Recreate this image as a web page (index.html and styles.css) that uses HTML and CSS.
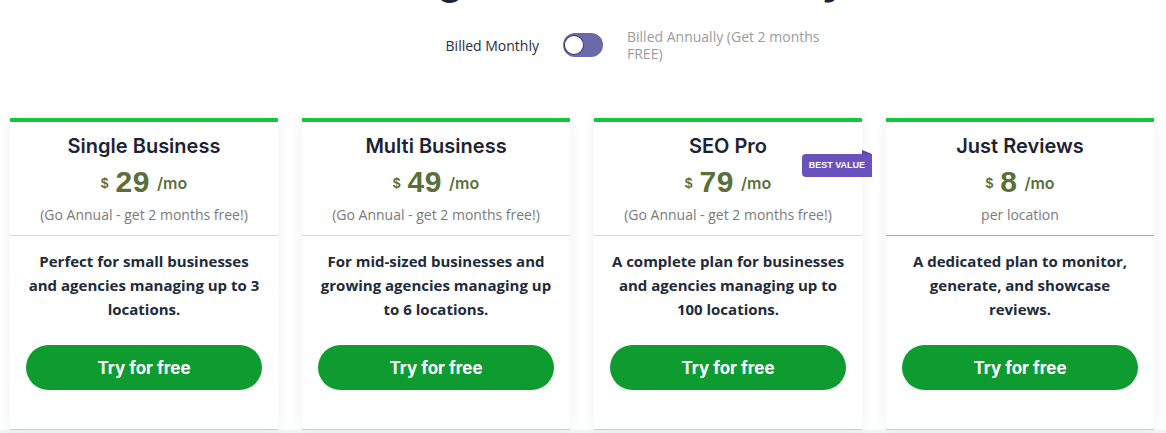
FILE: index.html
```html
<!DOCTYPE html>
<html>
<head>
<meta charset="utf-8">
<link rel="stylesheet" href="styles.css">
</head>
<body>
<section class="pricing">
  <h1 class="heading">Pricing That Scales Easily</h1>
  <div class="billing">
    <span class="bill-label bill-monthly">Billed Monthly</span>
    <span class="switch"><span class="knob"></span></span>
    <span class="bill-label bill-annual"><span>Billed Annually (Get 2 months FREE)</span></span>
  </div>
  <div class="cards">
    <div class="card">
      <div class="card-head">
        <h2 class="plan">Single Business</h2>
        <div class="price"><span class="cur">$</span><span class="amount">29</span><span class="per">/mo</span></div>
        <div class="note">(Go Annual - get 2 months free!)</div>
      </div>
      <div class="card-body">
        <p class="desc">Perfect for small businesses and agencies managing up to 3 locations.</p>
        <a class="btn">Try for free</a>
      </div>
    </div>
    <div class="card">
      <div class="card-head">
        <h2 class="plan">Multi Business</h2>
        <div class="price"><span class="cur">$</span><span class="amount">49</span><span class="per">/mo</span></div>
        <div class="note">(Go Annual - get 2 months free!)</div>
      </div>
      <div class="card-body">
        <p class="desc">For mid-sized businesses and growing agencies managing up to 6 locations.</p>
        <a class="btn">Try for free</a>
      </div>
    </div>
    <div class="card">
      <span class="badge">BEST VALUE</span>
      <div class="card-head">
        <h2 class="plan">SEO Pro</h2>
        <div class="price"><span class="cur">$</span><span class="amount">79</span><span class="per">/mo</span></div>
        <div class="note">(Go Annual - get 2 months free!)</div>
      </div>
      <div class="card-body">
        <p class="desc">A complete plan for businesses and agencies managing up to 100 locations.</p>
        <a class="btn">Try for free</a>
      </div>
    </div>
    <div class="card">
      <div class="card-head card-head-alt">
        <h2 class="plan">Just Reviews</h2>
        <div class="price"><span class="cur">$</span><span class="amount">8</span><span class="per">/mo</span></div>
        <div class="note">per location</div>
      </div>
      <div class="card-body">
        <p class="desc">A dedicated plan to monitor, generate, and showcase reviews.</p>
        <a class="btn">Try for free</a>
      </div>
    </div>
  </div>
  <div class="strip"></div>
</section>
</body>
</html>
```
FILE: styles.css
```css
* { box-sizing: border-box; }
html, body { margin: 0; padding: 0; background: #fff; }
body { font-family: "Open Sans", "Liberation Sans", sans-serif; overflow: hidden; }

.pricing { width: 1166px; }

.heading {
  margin: -44px 0 0;
  height: 48px;
  line-height: 48px;
  font-family: "Inter", "Liberation Sans", sans-serif;
  font-weight: 700;
  font-size: 40px;
  color: #1d2333;
  text-align: center;
  overflow: hidden;
  letter-spacing: 1px;
}

.billing {
  display: grid;
  grid-template-columns: 1fr 40px 1fr;
  column-gap: 24px;
  align-items: center;
  margin-top: 24px;
  height: 34px;
}
.bill-label { font-size: 14px; line-height: 17px; }
.bill-monthly { text-align: right; color: #2b2d3d; }
.bill-annual { color: #9b9b9b; }
.bill-annual span { display: block; max-width: 200px; }

.switch {
  position: relative;
  display: block;
  width: 40px;
  height: 24px;
  border-radius: 12px;
  background: #6b69a8;
}
.knob {
  position: absolute;
  left: 2px;
  top: 3px;
  width: 18px;
  height: 18px;
  border-radius: 50%;
  background: #fff;
  box-shadow: 0 0 0 1px #3f3d78;
}

.cards {
  display: grid;
  grid-template-columns: repeat(4, 268px);
  column-gap: 24px;
  padding-left: 10px;
  margin-top: 56px;
}
.card {
  position: relative;
  background: #fff;
  border-top: 4px solid #14c83c;
  border-bottom: 1px solid #c9cfd8;
  box-shadow: 0 0 14px rgba(0, 0, 0, 0.06);
  height: 312px;
}
.card-head {
  text-align: center;
  padding: 10px 10px 10px;
  border-bottom: 1px solid #d6e6a0;
}
.card-head-alt { border-bottom-color: #de9a66; }
.plan {
  margin: 0;
  font-family: "Inter", "Liberation Sans", sans-serif;
  font-weight: 600;
  font-size: 20px;
  line-height: 28px;
  color: #1d2333;
}
.price {
  display: flex;
  justify-content: center;
  align-items: center;
  height: 36px;
  margin-top: 4px;
  color: #5b7038;
  font-family: "Liberation Sans", Arial, sans-serif;
  font-weight: 700;
}
.cur { font-size: 14px; margin-right: 7px; margin-top: 2px; }
.amount { font-size: 30px; letter-spacing: 0.5px; }
.per {
  font-family: "Inter", "Liberation Sans", sans-serif;
  font-size: 16px;
  font-weight: 600;
  margin-left: 7px;
  margin-top: 2px;
}
.note { font-size: 14px; line-height: 20px; color: #7a7a7a; margin-top: 5px; }

.card-body { padding: 13px 16px 0; text-align: center; }
.desc {
  margin: 0;
  font-weight: 700;
  font-size: 15px;
  line-height: 24px;
  color: #222a3a;
  min-height: 72px;
}
.btn {
  display: flex;
  align-items: center;
  justify-content: center;
  margin: 24px 0 0;
  height: 45px;
  border-radius: 23px;
  background: #0e9c30;
  color: #fff;
  font-family: "Inter", "Liberation Sans", sans-serif;
  font-weight: 700;
  font-size: 17px;
}

.badge {
  position: absolute;
  right: -10px;
  top: 32px;
  height: 23px;
  padding: 0 7px;
  line-height: 23px;
  background: #6a52be;
  color: #fff;
  font-family: "Liberation Sans", Arial, sans-serif;
  font-weight: 700;
  font-size: 9px;
  border-radius: 4px 0 0 4px;
}
.badge::before {
  content: "";
  position: absolute;
  right: 0;
  top: -4px;
  border-left: 10px solid #5a43a8;
  border-top: 4px solid transparent;
}

.strip { height: 10px; background: #eef4f8; }
```
